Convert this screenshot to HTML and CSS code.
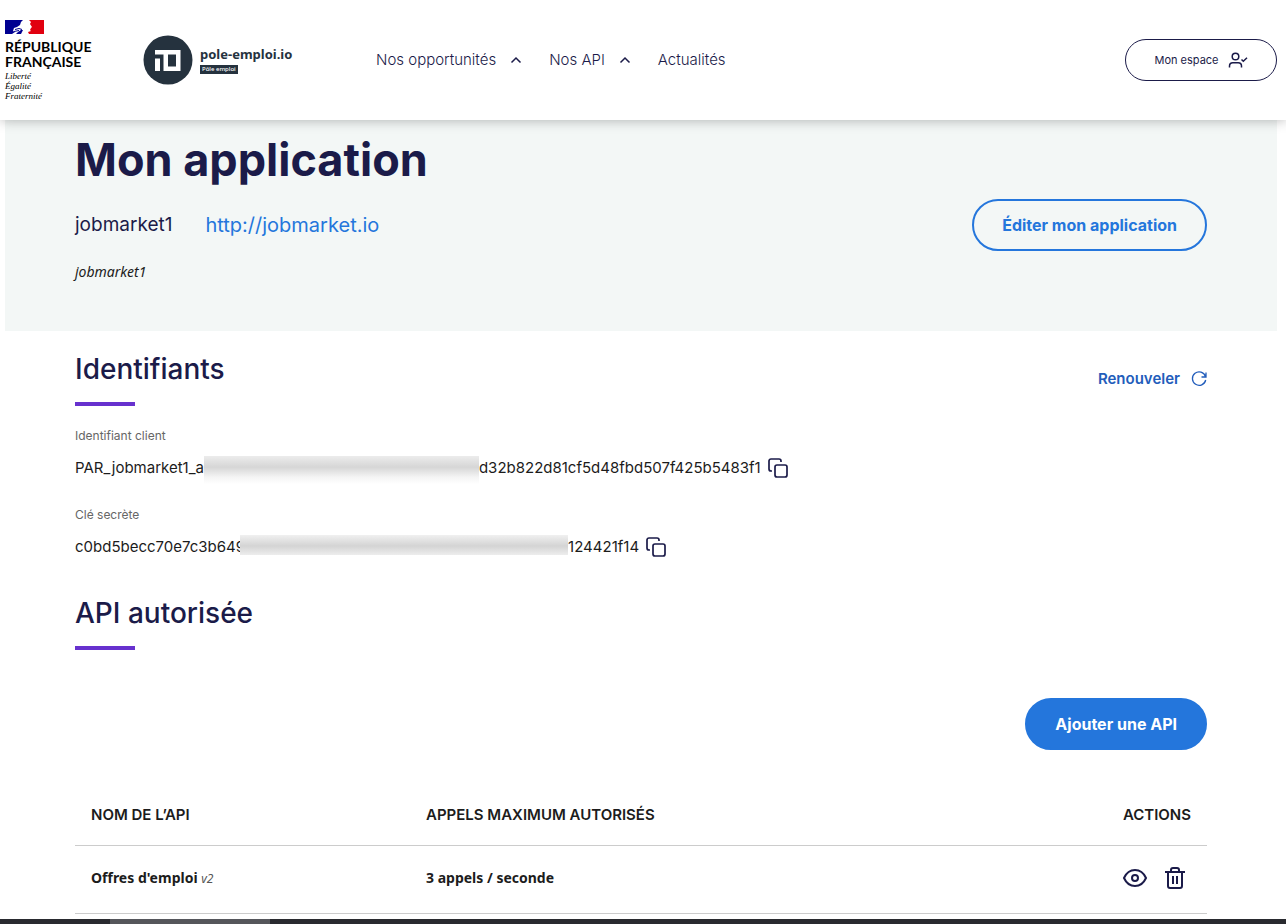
FILE: index.html
```html
<!DOCTYPE html>
<html lang="fr">
<head>
<meta charset="utf-8">
<meta name="viewport" content="width=device-width, initial-scale=1">
<title>Mon application - pole-emploi.io</title>
<link rel="stylesheet" href="styles.css">
</head>
<body>
<header class="header">
  <div class="republic">
    <svg class="republic-flag" width="39" height="14" viewBox="0 0 39 14" aria-hidden="true">
      <path fill="#fff" d="M0 0h39v14H0z"/>
      <path fill="#000091" d="M0 0h18l-2 2-1 3-3 2-3 1-1 3 2 1-3 2H0z"/>
      <path fill="#000091" d="M16 10h2l-2 4h-5l2-2z"/>
      <path fill="#e1000f" d="M24 0h15v14H24l-1-2 3-1-1-1 1-2 1-1-2-3 1-2z"/>
      <path fill="none" stroke="#000091" d="M10 9.500l4-1 3 1M9 11.500l5-1"/>
    </svg>
    <span class="republic-name"><span>RÉPUBLIQUE</span><span>FRANÇAISE</span></span>
    <span class="republic-motto">Liberté<br>Égalité<br>Fraternité</span>
  </div>
  <a class="brand" href="#">
    <svg width="50" height="50" viewBox="0 0 50 50" aria-hidden="true">
      <circle cx="25" cy="25" r="24.5" fill="#25323e"/>
      <path fill="#fff" fill-rule="evenodd" d="M12 15h25.500v21h-17V19.500H12zM25 19.500V31.500h8v-12z"/>
      <path fill="#fff" d="M12 23.500h5V36h-5z"/>
    </svg>
    <span class="brand-text">
      <span class="brand-name">pole-emploi.io</span>
      <span class="brand-tag">Pôle emploi</span>
    </span>
  </a>
  <nav class="nav">
    <a href="#">Nos opportunités <svg class="chevron" width="12" height="8" viewBox="0 0 12 8" aria-hidden="true"><path d="M1.500 6.500 6 2l4.500 4.500"/></svg></a>
    <a href="#">Nos API <svg class="chevron" width="12" height="8" viewBox="0 0 12 8" aria-hidden="true"><path d="M1.500 6.500 6 2l4.500 4.500"/></svg></a>
    <a href="#">Actualités</a>
  </nav>
  <button class="account" type="button">Mon espace
    <svg width="20" height="16" viewBox="0 0 20 16" aria-hidden="true"><circle cx="7.500" cy="4.500" r="3.300"/><path d="M1.500 15.500v-1.500a3.300 3.300 0 0 1 3.300-3.300h5.400a3.300 3.300 0 0 1 3.300 3.300v1.500M13.500 7.500l1.800 1.800L19 5.700"/></svg>
  </button>
</header>

<main>
  <section class="hero">
    <h1>Mon application</h1>
    <div class="hero-row">
      <p class="app-name">jobmarket1 <a href="http://jobmarket.io">http://jobmarket.io</a></p>
      <button class="button button-outline" type="button">Éditer mon application</button>
    </div>
    <p class="app-description">jobmarket1</p>
  </section>

  <section class="section">
    <div class="section-head">
      <h2>Identifiants</h2>
      <button class="renew" type="button">Renouveler
        <svg width="16" height="16" viewBox="0 0 16 16" aria-hidden="true"><path d="M15 1.500v4.500h-4.500M14.500 5.500A6.700 6.700 0 1 0 14.700 9"/></svg>
      </button>
    </div>
    <dl class="credentials">
      <dt>Identifiant client</dt>
      <dd><span>PAR_jobmarket1_a</span><span class="mask mask-client"></span><span>d32b822d81cf5d48fbd507f425b5483f1</span>
        <button class="icon-button" type="button" aria-label="Copier l’identifiant client"><svg width="20" height="20" viewBox="0 0 20 20" aria-hidden="true"><rect x="7" y="7" width="12" height="12" rx="2"/><path d="M4 13H3a2 2 0 0 1-2-2V3a2 2 0 0 1 2-2h8a2 2 0 0 1 2 2v1"/></svg></button></dd>
      <dt>Clé secrète</dt>
      <dd><span>c0bd5becc70e7c3b649</span><span class="mask mask-secret"></span><span>124421f14</span>
        <button class="icon-button" type="button" aria-label="Copier la clé secrète"><svg width="20" height="20" viewBox="0 0 20 20" aria-hidden="true"><rect x="7" y="7" width="12" height="12" rx="2"/><path d="M4 13H3a2 2 0 0 1-2-2V3a2 2 0 0 1 2-2h8a2 2 0 0 1 2 2v1"/></svg></button></dd>
    </dl>
  </section>

  <section class="section section-api">
    <h2>API autorisée</h2>
    <div class="toolbar"><button class="button button-solid" type="button">Ajouter une API</button></div>
    <table class="apis">
      <thead>
        <tr><th class="col-name" scope="col">NOM DE L’API</th><th scope="col">APPELS MAXIMUM AUTORISÉS</th><th class="col-actions" scope="col">ACTIONS</th></tr>
      </thead>
      <tbody>
        <tr>
          <td>Offres d'emploi <em>v2</em></td>
          <td>3 appels / seconde</td>
          <td class="col-actions">
            <div class="actions">
              <button class="icon-button" type="button" aria-label="Voir"><svg width="24" height="24" viewBox="0 0 24 24" aria-hidden="true"><path d="M1 12C3.500 6.500 7.500 4 12 4s8.500 2.500 11 8c-2.500 5.500-6.500 8-11 8S3.500 17.500 1 12z"/><circle cx="12" cy="12" r="3"/></svg></button>
              <button class="icon-button" type="button" aria-label="Supprimer"><svg width="20" height="24" viewBox="0 0 20 24" aria-hidden="true"><path d="M0 6h20M6 6V4a2 2 0 0 1 2-2h4a2 2 0 0 1 2 2v2M3 6v14a2 2 0 0 0 2 2h10a2 2 0 0 0 2-2V6M8 10v8M12 10v8"/></svg></button>
            </div>
          </td>
        </tr>
      </tbody>
    </table>
  </section>
</main>
<div class="bottom-strip"></div>
</body>
</html>
```

FILE: styles.css
```css
* {
  box-sizing: border-box;
}

body {
  margin: 0;
  background: #fff;
  color: #1c1c1c;
  font: 15px/24px Inter, "Liberation Sans", sans-serif;
}

h1,
h2,
p,
dl,
dd {
  margin: 0;
}

a {
  color: inherit;
  text-decoration: none;
}

button {
  padding: 0;
  border: 0;
  background: none;
  color: inherit;
  font: inherit;
  cursor: pointer;
}

svg {
  display: block;
  flex: none;
}

.header {
  position: relative;
  display: flex;
  align-items: center;
  height: 120px;
  padding: 0 9px 0 5px;
  background: #fff;
  box-shadow: 0 0 12px rgba(0, 0, 0, 0.3);
  color: #1b1b49;
}

.republic {
  display: flex;
  flex-direction: column;
  width: 138px;
  color: #000;
}

.republic-name {
  display: flex;
  flex-direction: column;
  margin-top: 5px;
  font: 700 14px/15px Lato, sans-serif;
}

.republic-motto {
  margin-top: 2px;
  font: italic 9px/10px "Liberation Serif", serif;
}

.brand {
  display: flex;
  align-items: center;
  gap: 7px;
  width: 233px;
  color: #25323e;
}

.brand-text {
  display: flex;
  flex-direction: column;
  align-items: flex-start;
  gap: 3px;
}

.brand-name {
  font: 700 13px/16px "Noto Sans", sans-serif;
}

.brand-tag {
  padding: 0 2px;
  background: #25323e;
  color: #fff;
  font: 500 6px/9px "Noto Sans", sans-serif;
}

.nav {
  display: flex;
  flex: 1;
  gap: 27px;
}

.nav a {
  display: flex;
  align-items: center;
  gap: 14px;
  font-weight: 300;
}

.chevron,
.account svg,
.renew svg,
.icon-button svg {
  fill: none;
  stroke: currentColor;
  stroke-width: 2;
  overflow: visible;
}

.nav .chevron,
.account svg {
  stroke-width: 1.5;
}

.account {
  display: flex;
  align-items: center;
  justify-content: center;
  gap: 9px;
  width: 152px;
  height: 42px;
  border: 1px solid #1b1b49;
  border-radius: 21px;
  font-size: 11px;
}

.hero {
  margin: 0 9px 0 5px;
  padding: 16px 70px 47px;
  background: #f3f7f6;
}

h1 {
  color: #1b1b49;
  font-size: 45px;
  font-weight: 700;
  line-height: 48px;
}

.hero-row {
  display: flex;
  align-items: center;
  justify-content: space-between;
  margin-top: 15px;
}

.app-name {
  display: flex;
  gap: 33px;
  color: #1b1b49;
  font-size: 19px;
}

.app-name a {
  color: #2476dc;
  font-size: 20px;
}

.app-description {
  margin-top: 9px;
  font: italic 14px/24px "Noto Sans", sans-serif;
}

.button {
  height: 52px;
  padding: 0 28px;
  border: 2px solid #2476dc;
  border-radius: 26px;
  font-size: 16px;
  font-weight: 700;
}

.button-outline {
  color: #2476dc;
}

.button-solid {
  background: #2476dc;
  color: #fff;
}

.section {
  margin: 0 79px 0 75px;
  padding-top: 20px;
}

.section-head {
  display: flex;
  justify-content: space-between;
}

h2 {
  color: #1b1b49;
  font-size: 28px;
  font-weight: 500;
  line-height: 36px;
}

h2::after {
  display: block;
  width: 60px;
  height: 4px;
  margin-top: 15px;
  background: #6731ce;
  content: "";
}

.renew {
  display: flex;
  align-items: center;
  align-self: center;
  gap: 11px;
  color: #225dbb;
  font-weight: 600;
}

.renew svg {
  stroke-width: 1.3;
}

.credentials {
  margin-top: 20px;
}

dt {
  color: #666;
  font-size: 12px;
  line-height: 20px;
}

dd {
  display: flex;
  align-items: center;
  height: 24px;
  margin-top: 10px;
}

dd + dt {
  margin-top: 25px;
}

dd .icon-button {
  margin-left: 7px;
}

.icon-button {
  color: #1b1b49;
}

dd .icon-button svg {
  stroke-width: 1.7;
}

.mask {
  align-self: flex-start;
}

.mask-client {
  width: 275px;
  height: 28px;
  background: linear-gradient(#ececec, #d6d6d6 40%, #f4f4f4 75%, #fff);
}

.mask-secret {
  width: 328px;
  height: 20px;
  margin-left: -5px;
  background: linear-gradient(#f0f0f0, #d4d4d4 55%, #ededed);
}

.section-api {
  padding-top: 36px;
}

.toolbar {
  display: flex;
  justify-content: flex-end;
  margin-top: 48px;
}

.apis {
  width: 100%;
  margin-top: 36px;
  border-collapse: collapse;
  text-align: left;
}

.apis th {
  height: 59px;
  padding: 0 16px;
  border-bottom: 1px solid #ccc;
  font-weight: 600;
}

.apis td {
  height: 68px;
  padding: 0 16px 2px;
  border-bottom: 1px solid #ccc;
  font: 700 14px/24px "Noto Sans", sans-serif;
}

.apis em {
  color: #555;
  font-size: 12px;
  font-weight: 400;
}

.apis .col-name {
  width: 335px;
}

.apis .col-actions {
  width: 100px;
}

.actions {
  display: flex;
  align-items: center;
  gap: 18px;
}

.bottom-strip {
  position: fixed;
  right: 0;
  bottom: 0;
  left: 0;
  height: 5px;
  background: linear-gradient(90deg, transparent 110px, #55565b 110px, #55565b 270px, transparent 270px), #292a2f;
}
```
